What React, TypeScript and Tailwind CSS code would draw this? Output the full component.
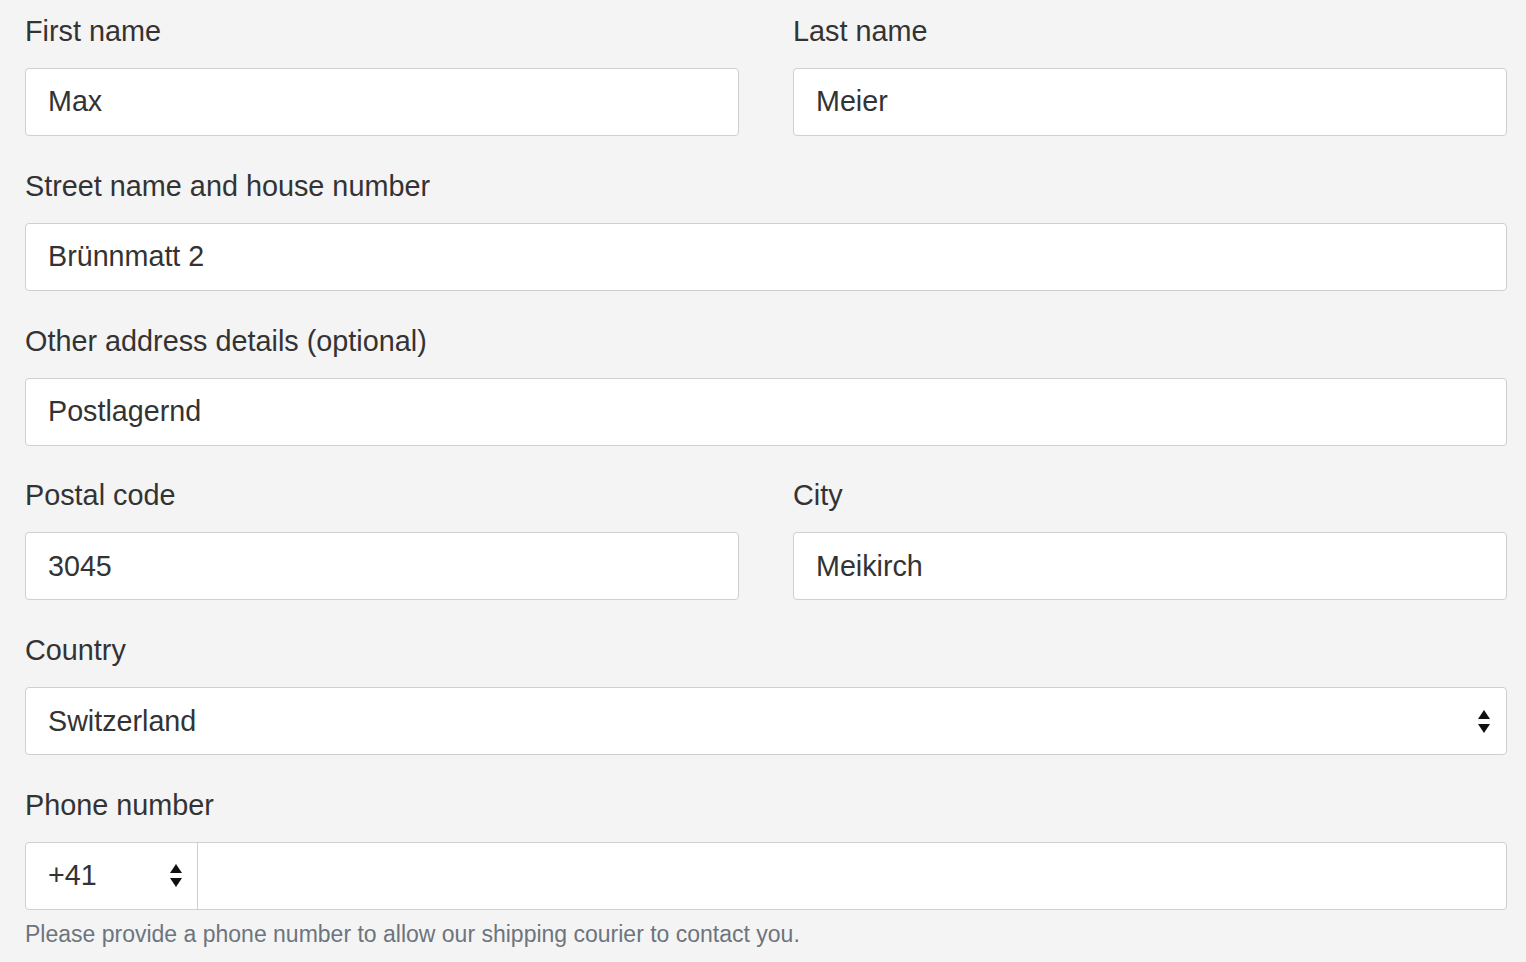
import React from "react";

function Caret() {
  return (
    <svg width="12" height="23" viewBox="0 0 12 23" className="shrink-0">
      <path d="M6 0 L12 9 L0 9 Z" fill="#111" />
      <path d="M0 14 L12 14 L6 23 Z" fill="#111" />
    </svg>
  );
}

function Field({ label, value, className = "" }: { label: string; value: string; className?: string }) {
  return (
    <div className={className}>
      <label className="block text-[28.8px] leading-[42px] text-[#333] mb-4">{label}</label>
      <div className="h-[68px] bg-white border border-[#cfcfcf] rounded-[4px] px-[22px] flex items-center text-[28.7px] text-[#333]">
        {value}
      </div>
    </div>
  );
}

export default function App() {
  return (
    <div
      className="min-h-[962px] bg-[#f4f4f4] pl-[25px] pr-[19px] pt-[10px]"
      style={{ fontFamily: '"Liberation Sans", Arial, sans-serif' }}
    >
      <div className="grid grid-cols-2 gap-x-[54px] gap-y-[28.8px]">
        <Field label="First name" value="Max" />
        <Field label="Last name" value="Meier" />
        <Field label="Street name and house number" value="Brünnmatt 2" className="col-span-2" />
        <Field label="Other address details (optional)" value="Postlagernd" className="col-span-2" />
        <Field label="Postal code" value="3045" />
        <Field label="City" value="Meikirch" />

        <div className="col-span-2">
          <label className="block text-[28.8px] leading-[42px] text-[#333] mb-4">Country</label>
          <div className="h-[68px] bg-white border border-[#cfcfcf] rounded-[4px] pl-[22px] pr-[16px] flex items-center justify-between text-[28.7px] text-[#333]">
            <span>Switzerland</span>
            <Caret />
          </div>
        </div>

        <div className="col-span-2">
          <label className="block text-[28.8px] leading-[42px] text-[#333] mb-4">Phone number</label>
          <div className="h-[68px] bg-white border border-[#cfcfcf] rounded-[4px] flex text-[28.7px] text-[#333]">
            <div className="w-[172px] border-r border-[#cfcfcf] pl-[22px] pr-[15px] flex items-center justify-between">
              <span>+41</span>
              <Caret />
            </div>
            <div className="flex-1" />
          </div>
          <p className="mt-[6px] text-[23px] leading-[36px] text-[#6c757d]">
            Please provide a phone number to allow our shipping courier to contact you.
          </p>
        </div>
      </div>
    </div>
  );
}
